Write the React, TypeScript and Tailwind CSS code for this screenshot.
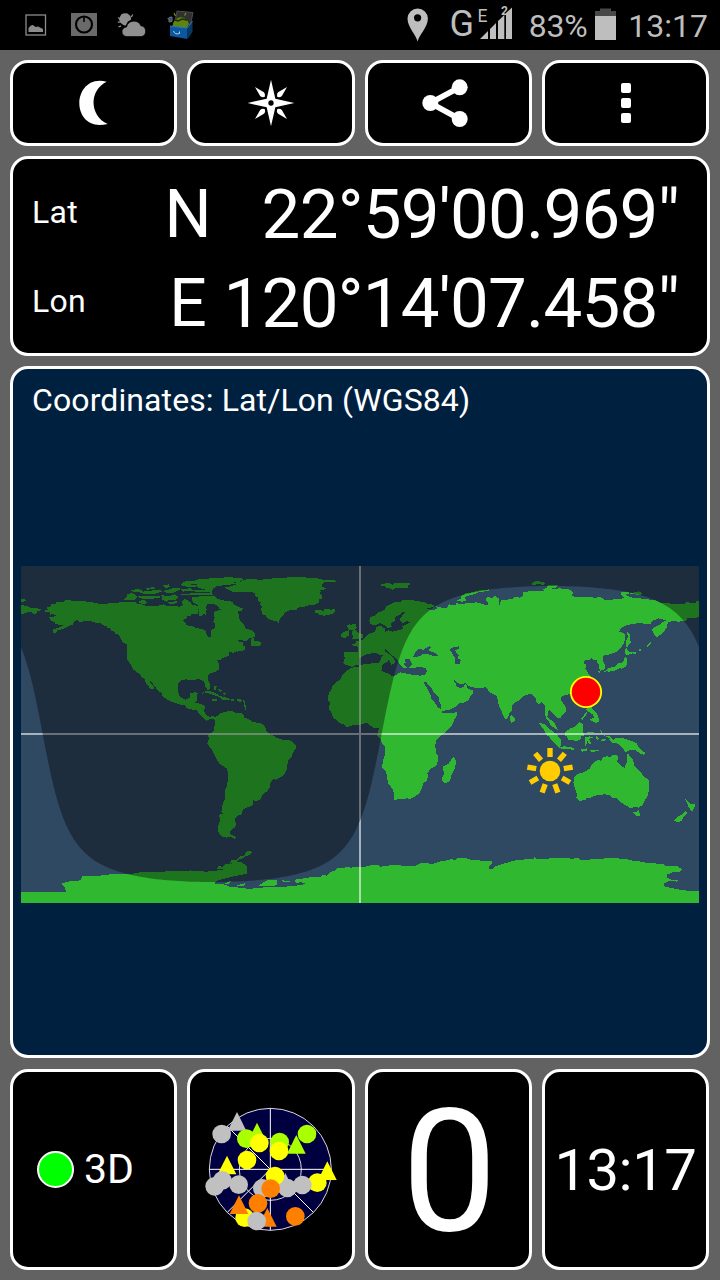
import React from "react";

type PanelProps = {
  children: React.ReactNode;
  className?: string;
};

type Tile = {
  x: number;
  y: number;
  land: string;
  sea?: string;
};

// the map is drawn in units of a third of a pixel, split in tiles
const MAP_WIDTH = 2034;
const MAP_HEIGHT = 1011;

const tiles: Tile[] = [
  {
    x: -3,
    y: -3,
    land:
      "M0 120L22 123 32 128 50 130 65 133 60 138 52 137 48 147 40 148 34 141 22 141 16 145 0 147ZM0 101H12L18 106 10 110H0Z" +
      "M72 138L84 134 80 128 90 126 94 118 106 117 110 110 130 110 136 105 150 105 156 109 196 109 206 112 228 113 236 117 260 117 268 113 296 113 300 110 320 112 348 112 354 117 370 119 378 123 392 122 410 123 430 118 445 124 468 123 478 126 488 120 485 108 496 102 512 112V152L500 153 500 160 488 166 496 172 500 180 512 184V345L498 343 484 346 475 355 473 372 476 388 482 398 496 404 506 400 512 400V432L500 430 498 422 480 419 466 413 455 411 440 402 428 396 425 385 412 374 400 358 390 348 391 354 402 366 402 373 390 373 386 362 378 355 374 342 364 336 360 328 350 322 346 316 340 316 334 302 327 290 320 283 320 238 308 232 303 222 295 208 286 206 282 198 274 198 270 190 262 188 258 182 248 181 242 175 226 175 222 170 196 168 180 171 172 166 162 168 160 178 142 185 128 193 112 195 108 203 98 203 100 193 122 186 130 180 108 178 104 172 94 168 88 157 100 155 110 150 98 148 90 149 90 140 78 141Z" +
      "M312 104L322 94 322 88 336 84 348 90 352 98 344 104 328 106ZM333 76L350 72 364 74 368 80 352 82 340 80ZM370 72L400 66 404 71 384 74ZM360 82L380 78 420 74 426 80 408 86 376 88ZM352 94L386 92 420 94 422 99 380 102 360 100ZM358 108L372 104 382 112 374 118 358 114ZM428 62L446 58 450 66 438 70ZM430 78L458 70 480 68 480 74 460 84 440 84ZM424 90L446 94 464 88 476 96 466 106 448 104 440 110 426 104ZM486 54L498 48 512 50V66L492 64 484 60ZM482 72L512 70V76L490 80ZM478 86H512V91H488ZM440 113L470 108 472 114 452 118Z",
  },
  {
    x: 507,
    y: -3,
    land:
      "M-1 110L8 120 22 122 26 135 24 148 4 146 -1 142ZM-1 183L12 185 18 189 38 192 48 198 50 210 54 216 62 216 64 196 74 188 76 178 70 170 74 156 70 150 74 140 92 134 98 126 92 122 110 112 132 116 134 126 142 134 146 150 150 168 160 176 166 190 186 196 196 208 194 216 178 220 172 227 142 226 148 231 158 232 158 240 164 244 164 256 148 258 140 262 140 257 132 263 118 262 116 272 96 280 92 286 82 286 88 302 88 312 78 320 58 326 54 332 54 346 60 358 60 372 54 376 46 364 42 350 30 344 24 340 12 346 -1 344Z" +
      "M183 222L190 217 194 228 212 230 214 240 206 244 183 243Z" +
      "M6 97L26 95 32 92 74 92 82 102 110 108 128 110 130 118 146 126 158 130 156 137 142 139 134 136 120 126 106 126 96 132 88 132 84 124 74 118 52 116 50 122 48 128 50 134 46 138 50 144 46 150 40 146 36 152 28 152 26 134 24 120 8 112Z" +
      "M-1 48L22 46 24 42 56 42 60 39 98 40 102 37 152 38 158 44 148 50 132 52 130 58 104 60 80 64 70 70 66 78 68 90 -1 89V84H60V81L-1 79V73L34 76 50 72 28 70 20 64 -1 68V62L26 58 -1 56Z" +
      "M104 68L124 64 138 58 130 54 152 50 160 44 200 42 206 46 230 41 262 40 296 37 336 36 352 38 380 40 394 42 402 46 436 46 438 50 424 52 406 50 396 58 394 64 408 70 402 74 388 74 394 80 388 84 396 92 396 100 386 104 388 112 378 118 352 122 340 126 324 128 320 134 298 136 286 142 280 150 272 158 268 166 266 174 260 168 246 166 232 160 226 150 218 148 212 132 218 126 208 118 212 112 202 106 206 98 194 92 196 86 184 80 150 80 132 82Z" +
      "M376 136L390 134 400 138 404 132 424 134 432 130 436 138 430 146 404 152 386 150 388 146 376 144Z" +
      "M470 180L480 178 484 182 488 176 498 178 500 188 494 194 504 204 512 212V224L486 222 490 214 485 206 488 196 476 194ZM452 210L462 200 476 196 478 210 468 218 452 217ZM482 236L496 236 498 228 512 226V262L505 260 502 244 490 243Z" +
      "M462 262L472 260 482 262 512 260V298L500 300 486 306 476 302 468 300 460 294 464 280Z" +
      "M484 308L512 305V480L492 480 470 487 462 478 450 475 440 466 428 456 424 442 416 432 420 414 414 406 416 384 424 374 428 362 440 350 450 344 456 332 466 320Z" +
      "M34 384L50 378 66 380 80 386 86 392 104 396 120 402 118 406 96 404 90 396 76 392 60 386 44 382 36 387ZM66 402H80V408H68ZM122 402L134 404 132 409 122 408ZM72 364L80 362 78 374 72 374ZM84 372L96 376 92 382ZM96 384L108 384 104 392ZM142 402L156 404 154 410 142 409ZM158 404L164 410 168 424V436L164 430 162 414Z" +
      "M-1 386L14 382 24 384 20 396 20 408 14 412 34 418 46 424 42 438 46 448 58 456 68 452 76 457 90 446 104 440 128 438 136 444 152 444 160 448 162 458 174 462 188 470 202 474 218 476 226 486 230 500 242 512H56L60 506 72 498 74 480 74 464 60 462 50 468 40 460 28 446 20 436 -1 432Z",
  },
  {
    x: 1017,
    y: -3,
    land:
      "M62 56L88 55 98 59 102 54 152 54 150 60 142 62 144 68 114 70 106 69 98 75 90 70 78 68 74 62 64 63Z" +
      "M-2 205L10 206 10 218 -2 222ZM-2 228L10 224 18 216 24 208 44 200 50 186 62 182 76 192 76 202 84 196 96 200 130 192 126 184 136 180 150 172 140 168 130 174 122 170 120 160 130 148 138 140 128 140 118 150 104 156 104 168 92 176 96 186 82 190 72 180 60 174 48 180 32 178 28 166 32 156 46 152 56 142 74 134 78 124 96 116 104 110 120 112 126 106 160 105 166 109 190 110 200 115 224 120 222 126 200 130 216 136 232 132 228 124 246 128 262 128 266 118 286 122 290 114 300 118 326 114 350 112 366 116 382 122 384 114 378 106 380 97 398 98 404 92 416 100 418 122 424 104 436 105 460 100 464 96 480 98 490 92 490 82 512 78V386L498 390 486 396 476 408 462 414 456 424 456 438 448 444 444 460 436 462 428 450 424 436 416 422 414 404 408 390 398 388 386 378 378 367 350 369 328 364 318 356 324 372 338 376 338 386 330 394 326 404 316 412 300 414 290 424 270 434 248 438 246 444 270 444 290 442 292 450 284 462 276 480 262 496 244 512H54L56 490 44 490 34 484 22 474 -2 478ZM452 448L464 460 464 468 454 474 450 464Z" +
      "M290 107L304 100 304 94 318 84 340 82 352 77 388 73 386 77 356 82 340 88 318 94 314 100 320 106 306 110Z",
    sea:
      "M-2 280L10 272 18 268 46 263 60 270 72 274 82 284 84 290 74 294 68 298 64 318 86 326 92 332 104 332 120 322 150 328 180 332 194 330 202 318 196 308 172 306 160 310 148 308 156 298 148 280 134 284 138 294 130 296 140 308 128 308 118 296 112 284 98 272 76 252 74 258 88 268 102 282 106 292 94 300 90 290 66 270 60 292 -2 300Z" +
      "M158 276L166 262 176 252 190 254 208 244 214 246 206 256 230 266 234 272 222 274 206 268 190 266 178 274Z" +
      "M270 254L276 248 298 244 298 250 286 256 288 264 296 270 294 280 302 284 300 297 284 297 286 280 278 268Z" +
      "M190 350L200 352 206 362 216 372 224 386 236 398 236 408 244 422 242 432 234 428 224 412 214 402 212 390 200 368Z" +
      "M278 343L286 346 292 354 306 358 318 354 312 364 300 370 290 364 286 354Z",
  },
  {
    x: 1527,
    y: -3,
    land:
      "M-1 79L42 78 40 72 54 68 70 72 88 70 112 72 124 76 130 84 124 94 160 96 200 98 204 94 218 100 226 106 240 104 272 102 284 98 274 90 272 80 288 80 300 84 286 90 306 98 330 100 362 104 378 106 394 114 430 116 464 118 468 112 498 114 500 106 507 108V156L488 160 470 160 470 166 446 170 428 168 414 172 410 188 402 200 388 212 382 218 372 208 366 194 374 186 392 178 400 170 408 166 386 160 366 168 362 176 344 176 326 174 302 178 290 180 270 192 268 200 284 206 284 226 280 238 270 250 258 262 238 268 220 272 220 290 226 304 222 316 210 316 206 308 208 300 202 294 202 284 190 286 184 280 178 284 166 286 160 294 170 300 166 310 174 324 184 336 196 350 190 380 150 386 118 388 106 390 94 396 92 406 106 422 108 440 96 450 92 458 84 460 76 452 64 442 58 434 54 442 52 456 62 464 74 476 84 496 78 492 62 482 56 470 48 462 44 440 44 420 34 412 28 418 20 412 18 402 8 390 -1 386Z" +
      "M290 200L300 208 302 234 294 242 290 250 288 230 294 216ZM284 252L290 250 296 260 310 262 306 266 290 271 284 266ZM308 262L318 260 318 266 308 266ZM320 256L336 250 332 257ZM348 244L362 230 364 236 354 246Z" +
      "M286 274L292 282 292 294 286 306 274 312 270 308 258 316 236 320 228 318 236 310 256 304 264 294 274 294 280 290ZM202 318L212 316 208 324ZM218 316L228 319 226 322Z" +
      "M166 432L184 426 190 436 200 444 206 460 206 470 196 474 180 464 192 458 188 448 176 440ZM152 462L170 440 172 444 158 464ZM26 473L46 478 54 488 70 500 84 512H52L40 492ZM104 502L118 492 136 484 148 472 160 478 158 490 162 512H106ZM172 500L194 500 190 505H172ZM210 494L218 500 214 508Z" +
      "M4 54L20 48 34 50 46 54 40 60 28 57 8 60ZM50 66L54 60 84 61 76 68 62 72 50 72ZM296 84L318 82 326 78 336 84 332 90 306 87Z",
  },
  {
    x: -3,
    y: 507,
    land: "M0 470H138L134 458 124 446 144 440 182 436 186 424 240 422 288 416 330 418 360 412 420 410 512 407V512H0Z",
  },
  {
    x: 507,
    y: 507,
    land:
      "M55 -1L56 12 52 26 64 42 72 56 80 74 88 86 104 96 112 102 114 120 112 150 106 164 106 190 98 208 94 232 102 234 88 240 90 258 84 276 86 294 96 306 110 308 120 304 134 312 138 306 126 300 118 294 124 284 136 276 138 266 134 252 144 242 154 238 160 222 176 216 190 210 190 196 200 198 212 192 220 176 232 168 240 156 242 142 252 132 256 134 276 124 284 118 290 104 294 76 304 66 310 52 318 38 316 28 300 16 276 14 260 8 244 -1Z" +
      "M-1 406L14 408 50 410 70 408 100 404 122 396 124 388 134 380 154 382 168 390 172 400 170 416 154 420 130 424 106 430 78 438 74 446 102 448 120 456 152 458 184 463 192 458 250 457 300 454 336 450 348 444 330 442 318 444 312 438 320 432 344 430 366 426 390 426 396 420 412 422 420 412 432 408 442 400 452 398 464 398 474 394 480 398 512 395V512H-1ZM202 454L214 446 236 434 262 436 262 450 240 454ZM276 436L300 438 298 442 278 440ZM104 446L116 440 126 438 118 446ZM140 452L166 444 162 452Z" +
      "M80 402L86 392 98 396 106 386 118 388 124 376 142 374 150 364 162 362 170 350 180 346 186 352 178 360 166 364 158 370 146 374 138 382 124 384 128 396 116 398 104 404Z",
  },
  {
    x: 1017,
    y: 507,
    land:
      "M50 -1L56 8 62 14 68 28 76 36 76 58 70 72 66 96 78 110 82 132 86 148 98 162 102 176 103 196 114 192 130 192 140 190 150 192 166 184 178 174 186 158 190 144 200 138 204 124 202 114 212 102 232 90 234 62 228 54 226 32 228 16 244 -1Z" +
      "M248 94L266 86 272 76 280 66 288 76 286 96 276 116 270 136 258 146 248 140 246 128 252 116Z" +
      "M-2 397H16L20 392 56 390 60 396 74 392 84 393 92 389 120 390 126 394 150 392 168 392 178 386 200 383 216 388 228 384 236 380 260 376 272 373 288 374 294 368 316 368 322 372 346 376 396 378 396 386 388 392 388 402 398 402 406 394 430 386 446 382 456 378 470 376 490 374 512 371V512H-2Z",
  },
  {
    x: 1527,
    y: 507,
    land:
      "M130 142L134 124 144 116 160 112 178 102 184 92 198 78 206 74 212 78 220 66 230 64 240 66 246 60 264 62 262 80 276 94 284 98 290 82 290 60 296 56 300 66 310 76 312 92 330 108 340 122 356 136 358 164 352 184 344 196 338 210 326 218 318 214 302 220 286 210 276 204 260 190 248 190 240 180 224 178 200 180 182 188 168 190 166 196 146 197 138 188 142 180 136 164Z" +
      "M306 230L318 232 328 222 329 244 318 242ZM236 12L252 14 256 8 280 10 300 16 320 24 326 38 336 48 346 52 342 60 330 56 318 46 304 44 286 52 280 40 264 26 246 24Z" +
      "M52 -1H80L92 14 94 30 88 38 72 24ZM86 36L104 34 130 38 132 44 96 42ZM110 -1H156L152 12 142 18 114 14ZM164 8L178 4 190 8 176 12 184 26 178 28 172 18 168 34 164 30ZM152 44L170 40 172 46 156 50ZM176 44L208 46 188 52ZM198 0L206 10 202 16 198 8ZM212 14L228 12 224 18H212ZM218 0L240 4 248 14 236 8Z" +
      "M466 193L474 198 480 206 496 208 494 216 486 230 476 216ZM466 227L474 234 462 244 454 258 440 262 432 256 448 242 456 238Z" +
      "M-1 371H12L13 366 18 371H56L58 368 90 370 118 368 122 371 146 370 150 374 180 374 186 371 218 373 226 368 264 368 270 372 300 374 310 378 336 380 346 383 376 384 384 388 400 388 410 394 440 393 456 402 450 412 428 412 412 418 410 428 424 434 446 434 442 440 420 438 408 442 400 446 402 454 430 460 448 464 470 467 507 468V512H-1Z",
  },
];

// latitude where the sun stands on the horizon, for each degree of longitude
const terminator = () => {
  const points: string[] = [];
  for (let lon = -180; lon <= 180; lon += 2) {
    const rad = ((lon - 101.5) * Math.PI) / 180;
    const lat =
      (Math.atan(Math.cos(rad) / Math.tan((10.7 * Math.PI) / 180)) * 180) /
      Math.PI;
    points.push(`${(lon + 180) * 5.65},${(504 - lat * 5.6).toFixed(1)}`);
  }
  return `M0,0 L${points.join(" L")} L${MAP_WIDTH},0 Z`;
};

const SILVER = "#c0c0c0";
const YELLOW = "#ffff00";
const LIME = "#aaff00";
const ORANGE = "#ff8000";

const satellites: [string, number, number, string][] = [
  ["gps", 80, 117, SILVER],
  ["glo", 126, 80, SILVER],
  ["glo", 186, 112, LIME],
  ["gps", 154, 131, LIME],
  ["gps", 193, 144, YELLOW],
  ["gps", 336, 117, LIME],
  ["gps", 254, 141, LIME],
  ["glo", 304, 149, LIME],
  ["gps", 252, 168, YELLOW],
  ["gps", 156, 195, YELLOW],
  ["glo", 96, 211, YELLOW],
  ["gps", 367, 263, YELLOW],
  ["glo", 397, 228, YELLOW],
  ["gps", 82, 256, SILVER],
  ["gps", 59, 274, SILVER],
  ["gps", 131, 269, SILVER],
  ["gps", 202, 280, SILVER],
  ["glo", 271, 263, SILVER],
  ["gps", 277, 279, SILVER],
  ["gps", 322, 270, SILVER],
  ["gps", 240, 243, YELLOW],
  ["gps", 227, 281, ORANGE],
  ["gps", 149, 368, YELLOW],
  ["glo", 132, 330, ORANGE],
  ["gps", 189, 325, ORANGE],
  ["glo", 217, 368, ORANGE],
  ["gps", 185, 378, SILVER],
  ["gps", 301, 364, ORANGE],
];

const Panel = ({ children, className = "bg-black" }: PanelProps) => (
  <div className={`flex rounded-[18px] border-[3px] border-white ${className}`}>
    {children}
  </div>
);

const StatusBar = () => (
  <header className="flex h-[50px] items-center bg-black text-[#bebebe]">
    <svg className="h-[50px] w-[210px]" viewBox="0 0 210 50">
      <rect x="26" y="15" width="19.5" height="20" fill="none" stroke="#8c8c8c" strokeWidth="1.3" />
      <path d="M28.5 32V28L31 25.5 33 25 35.5 27 38 26.5 43 29V32Z" fill="#8c8c8c" />
      <path d="M71 13H97V36H71Z" fill="#6a6a6a" />
      <circle cx="84" cy="24.5" r="8" fill="#6a6a6a" stroke="#000" strokeWidth="2.2" />
      <path d="M84 16V22" stroke="#000" strokeWidth="1.6" />
      <g fill="#8f8f8f">
        <path d="M122 24a5.8 5.8 0 1 1 9-4.2 8 8 0 0 0-5 5.5Q124 26 122 24Z" />
        <path d="M127 36.6a4.8 4.8 0 0 1-.5-9.6 7.6 7.6 0 0 1 14.4-1.2 5.5 5.5 0 0 1 .5 10.8Z" stroke="#000" strokeWidth=".7" />
      </g>
      <path d="M127 13.5V16.5M121.6 14.6L122.8 17.3M132.7 14.5L131.3 17.2M118.2 17.5L120.4 19.5M117.8 22.2H120.6M118.5 27L121 25.8" stroke="#8f8f8f" strokeWidth="1.3" />
      <path d="M177 11L193 12.5 190.5 25 175 22Z" fill="#303030" stroke="#4c4c4c" />
      <path d="M172.5 26A8.5 10 0 0 1 189 24L187 28H173Z" fill="#5d8510" />
      <path d="M175.5 16L174 13M184.5 15.5L186 13" stroke="#6f9a18" strokeWidth="1.2" />
      <path d="M174 19.5L178 21 182 19 187 20" stroke="#1d2c06" strokeWidth="1.6" fill="none" />
      <path d="M170 26L187.5 28V39L170 36Z" fill="#0c58a0" />
      <path d="M187.5 28L192.5 21V32L187.5 39Z" fill="#063866" />
      <path d="M170 26L187.5 28 192.5 21" stroke="#2a77b8" fill="none" />
      <path d="M173.5 31Q175 35 179.5 33.5V31.5" stroke="#b8cde0" fill="none" />
      <path d="M167.5 18L170 20.5M169 17.5L172 17V21.5L169 22Z" stroke="#63758c" fill="#39485c" />
    </svg>
    <div className="ml-auto flex h-[50px] items-center pr-[12px]">
      <svg className="mr-[8px] h-[50px] w-[114px]" viewBox="407 0 114 50">
        <path
          fillRule="evenodd"
          d="M417.6 41.5C416 35 407.5 27 407.5 18.6A10.2 10.2 0 0 1 427.9 18.6C427.9 27 419.2 35 417.6 41.5ZM417.6 14.2A3.6 3.6 0 1 0 417.6 21.4 3.6 3.6 0 1 0 417.6 14.2Z"
          fill="#bebebe"
        />
        <text x="449.5" y="36" fontSize="36" fill="#bebebe" fontFamily="Roboto">G</text>
        <text x="477.5" y="21.5" fontSize="19" fill="#bebebe" fontFamily="Roboto" textLength="10" lengthAdjust="spacingAndGlyphs">E</text>
        <text x="501" y="14.5" fontSize="12" fontWeight="700" fill="#bebebe" fontFamily="Roboto">2</text>
        <path d="M480 39L488 31V39ZM490 29L496 23V39H490ZM498 21L504.3 15V39H498ZM506 13L512 7.5V39H506Z" fill="#bebebe" />
      </svg>
      <span className="mt-px text-[32px] tracking-[-0.3px]">83%</span>
      <svg className="ml-[8px] h-[50px] w-[21px]" viewBox="0 0 21 50">
        <path d="M0 11H5V8.5H16V11H21V17H0Z" fill="#484848" />
        <path d="M0 16H21V40H0Z" fill="#bebebe" />
      </svg>
      <span className="ml-[12px] mt-px text-[32px]">13:17</span>
    </div>
  </header>
);

const WorldMap = () => (
  <svg
    className="mt-[144px] h-[337px] w-[678px]"
    viewBox={`0 0 ${MAP_WIDTH} ${MAP_HEIGHT}`}
  >
    <rect width={MAP_WIDTH} height={MAP_HEIGHT} fill="#2f4963" />
    {tiles.map((tile) => (
      <g
        key={`${tile.x},${tile.y}`}
        transform={`translate(${tile.x} ${tile.y})`}
        shapeRendering="crispEdges"
      >
        <path d={tile.land} fill="#30b830" />
        {tile.sea && <path d={tile.sea} fill="#2f4963" />}
      </g>
    ))}
    <path
      d={`M0 504H${MAP_WIDTH}M1017 0V${MAP_HEIGHT}`}
      stroke="#fff"
      strokeOpacity=".58"
      strokeWidth="6"
    />
    <path d={terminator()} fill="#000" fillOpacity=".375" fillRule="evenodd" />

    {/* sun */}
    <g transform="translate(1587 615)" fill="#ffcc00">
      <circle r="31" />
      {[0, 40, 80, 120, 160, 200, 240, 280, 320].map((angle) => (
        <rect key={angle} x="-8" y="-69" width="16" height="27" transform={`rotate(${angle})`} />
      ))}
    </g>

    {/* current position */}
    <circle cx="1695" cy="378" r="45.5" fill="#ff0000" stroke="#ffff00" strokeWidth="5.5" />
  </svg>
);

const SkyView = () => (
  <svg className="mr-[2px] h-[150px] w-[150px]" viewBox="0 0 450 450">
    <circle cx="226" cy="223" r="183" fill="#000040" stroke="#d8d8e0" strokeWidth="3" />
    <circle cx="226" cy="223" r="93" fill="none" stroke="#d8d8e0" strokeWidth="3" />
    <path d="M226 40V406M43 223H409M97 94L355 352M226 223L97 352" stroke="#fff" strokeWidth="3" />
    {satellites.map(([kind, x, y, color]) =>
      kind === "gps" ? (
        <circle key={`${x},${y}`} cx={x} cy={y} r="28" fill={color} />
      ) : (
        <path key={`${x},${y}`} d={`M${x} ${y - 29}l28 56h-56Z`} fill={color} />
      )
    )}
  </svg>
);

const App = () => {
  return (
    <div className="flex h-[1280px] w-[720px] flex-col overflow-hidden bg-[#626262] font-['Roboto',sans-serif] text-white">
      <StatusBar />
      <main className="flex flex-col pl-[10px] pt-[10px]">
        <div className="grid h-[86px] w-[699px] grid-cols-4 gap-[10px]">
          <Panel className="items-center justify-center bg-black">
            <svg className="ml-[4px] h-[50px] w-[50px]" viewBox="0 0 150 150">
              <path d="M107 11C51 -3 25 40 25 76C25 112 51 153 110 138C56 114 52 38 107 11Z" fill="#fff" />
            </svg>
          </Panel>
          <Panel className="items-center justify-center bg-black">
            <svg className="h-[48px] w-[48px]" viewBox="0 0 144 144">
              <g transform="translate(72 72)" fill="#fff">
                <path d="M0 -70L13 -13 70 0 13 13 0 70 -13 13 -70 0 -13 -13Z" />
                {[45, 135, 225, 315].map((angle) => (
                  <path key={angle} d="M0 -68L8 -38Q8 -30 0 -26Q-8 -30 -8 -38Z" transform={`rotate(${angle})`} />
                ))}
                <circle r="8" fill="#000" />
              </g>
            </svg>
          </Panel>
          <Panel className="items-center justify-center bg-black">
            <svg className="mr-[4px] h-[50px] w-[50px]" viewBox="0 0 150 150">
              <path d="M116 28L28 75 116 123" fill="none" stroke="#fff" strokeWidth="17" />
              <circle cx="116" cy="28" r="24" fill="#fff" />
              <circle cx="28" cy="75" r="24" fill="#fff" />
              <circle cx="116" cy="123" r="24" fill="#fff" />
            </svg>
          </Panel>
          <Panel className="flex-col items-center justify-center gap-[5px] bg-black pl-[2px]">
            <span className="h-[10px] w-[10px] rounded-[2px] bg-white" />
            <span className="h-[10px] w-[10px] rounded-[2px] bg-white" />
            <span className="h-[10px] w-[10px] rounded-[2px] bg-white" />
          </Panel>
        </div>

        <Panel className="mt-[10px] h-[200px] w-[700px] flex-col bg-black pl-[19px] pr-[28px] pt-[11px]">
          <div className="flex h-[89px] items-center">
            <span className="mb-[6px] w-[125px] text-[32px] tracking-[0.3px]">Lat</span>
            <span className="mb-px w-[62px] text-center text-[66px]">N</span>
            <span className="ml-auto text-[69px] leading-none tracking-[-0.75px]">22°59'00.969"</span>
          </div>
          <div className="flex h-[89px] items-center">
            <span className="mb-[6px] w-[125px] text-[32px] tracking-[0.3px]">Lon</span>
            <span className="mb-px w-[62px] text-center text-[66px]">E</span>
            <span className="ml-auto text-[69px] leading-none tracking-[-0.75px]">120°14'07.458"</span>
          </div>
        </Panel>

        <Panel className="mt-[10px] h-[692px] w-[700px] flex-col bg-[#00203f] pl-[8px] pt-[11px]">
          <h1 className="ml-[11px] h-[42px] text-[32px] leading-[40px] tracking-[0.1px]">
            Coordinates: Lat/Lon (WGS84)
          </h1>
          <WorldMap />
        </Panel>

        <div className="mt-[11px] grid h-[201px] w-[699px] grid-cols-4 gap-[10px]">
          <Panel className="items-center bg-black pl-[24px]">
            <span className="h-[37px] w-[37px] rounded-full border-2 border-white bg-[#00ff00]" />
            <span className="ml-[10px] mt-px text-[41px]">3D</span>
          </Panel>
          <Panel className="items-center justify-center bg-black">
            <SkyView />
          </Panel>
          <Panel className="items-center justify-center bg-black pl-[3px] pt-[4px]">
            <span className="text-[170px] leading-none">0</span>
          </Panel>
          <Panel className="items-center justify-center bg-black pt-[2px]">
            <span className="text-[58px] tracking-[-0.5px]">13:17</span>
          </Panel>
        </div>
      </main>
    </div>
  );
};

export default App;
